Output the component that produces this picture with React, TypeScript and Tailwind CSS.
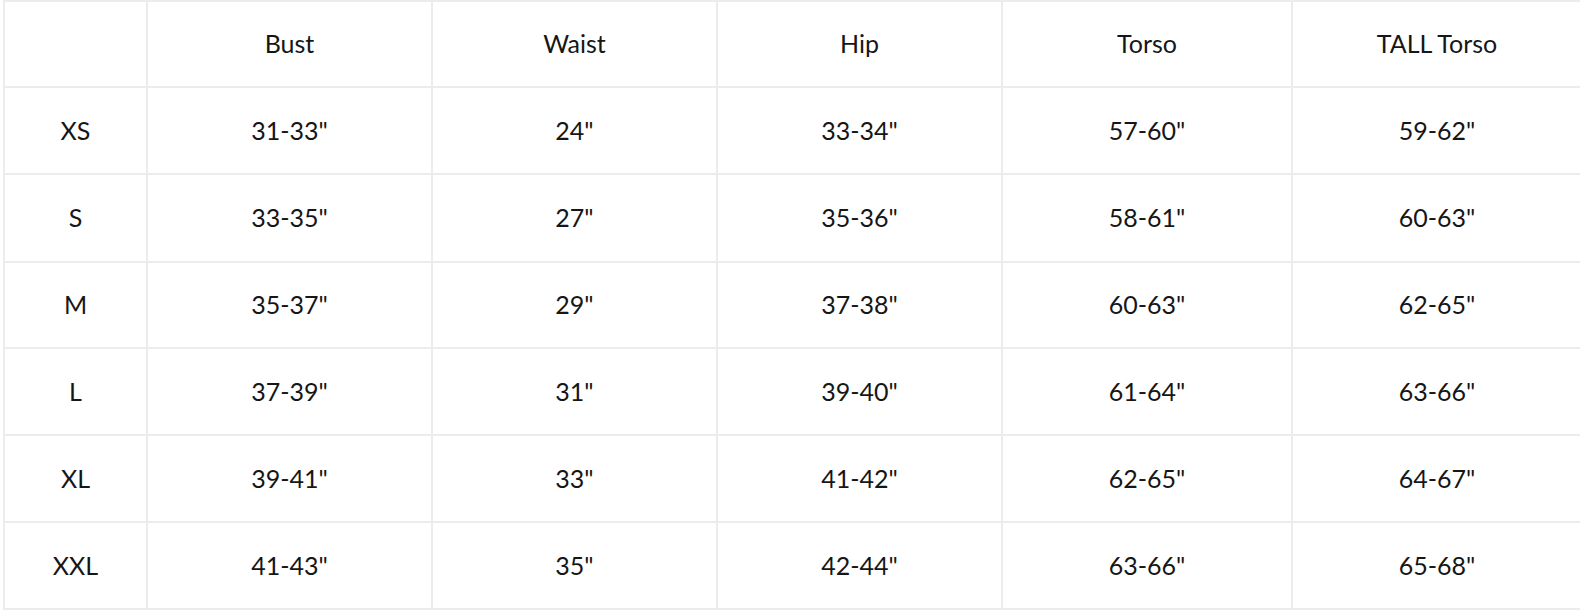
import React from "react";

const headers = ["", "Bust", "Waist", "Hip", "Torso", "TALL Torso"];
const rows: string[][] = [
  ["XS", "31-33\"", "24\"", "33-34\"", "57-60\"", "59-62\""],
  ["S", "33-35\"", "27\"", "35-36\"", "58-61\"", "60-63\""],
  ["M", "35-37\"", "29\"", "37-38\"", "60-63\"", "62-65\""],
  ["L", "37-39\"", "31\"", "39-40\"", "61-64\"", "63-66\""],
  ["XL", "39-41\"", "33\"", "41-42\"", "62-65\"", "64-67\""],
  ["XXL", "41-43\"", "35\"", "42-44\"", "63-66\"", "65-68\""],
];

const rowHeights = ["h-[87px]", "h-[88px]", "h-[86px]", "h-[87px]", "h-[87px]", "h-[87px]"];

function Row({ cells, h, first }: { cells: string[]; h: string; first?: boolean }) {
  return (
    <div className="grid grid-cols-[145px_285px_285px_285px_290px_290px]">
      {cells.map((c, i) => (
        <div
          key={i}
          className={`${h} flex items-center justify-center border-r-2 border-b-2 border-[#ececec] ${i === 0 ? "border-l-2" : ""} ${first ? "border-t-2" : ""}`}
        >
          {c}
        </div>
      ))}
    </div>
  );
}

export default function App() {
  return (
    <div className="w-[1580px] h-[612px] overflow-hidden bg-white">
      <div
        className="ml-[3px] w-[1580px] text-[25px] text-[#161616]"
        style={{ fontFamily: "Lato, 'Noto Sans', sans-serif" }}
      >
        <Row cells={headers} h="h-[88px]" first />
        {rows.map((r, i) => (
          <Row key={i} cells={r} h={rowHeights[i]} />
        ))}
      </div>
    </div>
  );
}
